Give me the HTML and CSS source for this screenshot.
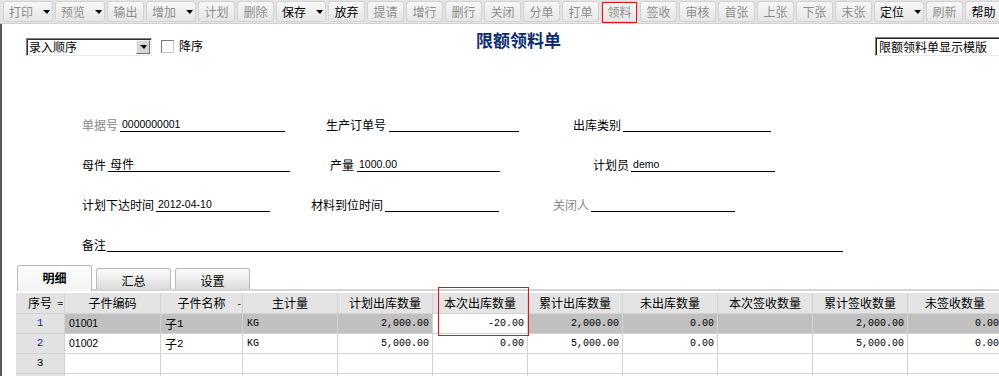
FILE: index.html
```html
<!DOCTYPE html>
<html lang="zh-CN">
<head>
  <meta charset="UTF-8">
  <title>限额领料单</title>
  <link rel="stylesheet" href="styles.css">
</head>
<body>
  <div class="toolbar">
    <span class="tb-btn drop first">打印<i class="arrow"></i></span>
    <span class="tb-btn drop">预览<i class="arrow"></i></span>
    <span class="tb-btn">输出</span>
    <span class="tb-btn drop">增加<i class="arrow"></i></span>
    <span class="tb-btn">计划</span>
    <span class="tb-btn">删除</span>
    <span class="tb-btn drop on">保存<i class="arrow"></i></span>
    <span class="tb-btn on">放弃</span>
    <span class="tb-btn">提请</span>
    <span class="tb-btn">增行</span>
    <span class="tb-btn">删行</span>
    <span class="tb-btn">关闭</span>
    <span class="tb-btn">分单</span>
    <span class="tb-btn">打单</span>
    <span class="tb-btn hot">领料</span>
    <span class="tb-btn">签收</span>
    <span class="tb-btn">审核</span>
    <span class="tb-btn">首张</span>
    <span class="tb-btn">上张</span>
    <span class="tb-btn">下张</span>
    <span class="tb-btn">末张</span>
    <span class="tb-btn drop on">定位<i class="arrow"></i></span>
    <span class="tb-btn">刷新</span>
    <span class="tb-btn on">帮助</span>
  </div>

  <div class="page">
    <div class="head">
      <div class="combo"><span class="combo-text">录入顺序</span><span class="combo-btn"><i class="arrow"></i></span></div>
      <div class="check"><span class="box"></span>降序</div>
      <h1 class="title">限额领料单</h1>
      <div class="tpl">限额领料单显示模版</div>
    </div>

    <div class="form">
      <div class="row">
        <div class="field f-no"><span class="lbl dim">单据号</span><span class="val num-val">0000000001</span></div>
        <div class="field f-order"><span class="lbl">生产订单号</span><span class="val"></span></div>
        <div class="field f-type"><span class="lbl">出库类别</span><span class="val"></span></div>
      </div>
      <div class="row">
        <div class="field f-parent"><span class="lbl">母件</span><span class="val">母件</span></div>
        <div class="field f-qty"><span class="lbl">产量</span><span class="val num-val">1000.00</span></div>
        <div class="field f-planner"><span class="lbl">计划员</span><span class="val num-val">demo</span></div>
      </div>
      <div class="row">
        <div class="field f-date"><span class="lbl">计划下达时间</span><span class="val num-val">2012-04-10</span></div>
        <div class="field f-arrive"><span class="lbl">材料到位时间</span><span class="val"></span></div>
        <div class="field f-closer"><span class="lbl dim">关闭人</span><span class="val"></span></div>
      </div>
      <div class="row">
        <div class="field f-memo"><span class="lbl">备注</span><span class="val"></span></div>
      </div>
    </div>

    <div class="tabs">
      <div class="tab active">明细</div>
      <div class="tab">汇总</div>
      <div class="tab">设置</div>
    </div>

    <div class="grid">
      <div class="grow head-row">
        <div class="c rh">序号<span class="grip">=</span></div>
        <div class="c">子件编码</div>
        <div class="c">子件名称<span class="grip">-</span></div>
        <div class="c">主计量</div>
        <div class="c">计划出库数量</div>
        <div class="c">本次出库数量</div>
        <div class="c">累计出库数量</div>
        <div class="c">未出库数量</div>
        <div class="c">本次签收数量</div>
        <div class="c">累计签收数量</div>
        <div class="c">未签收数量</div>
      </div>
      <div class="grow sel">
        <div class="c rh blue">1</div>
        <div class="c txt code">01001</div>
        <div class="c txt">子<span class="digit">1</span></div>
        <div class="c txt mono">KG</div>
        <div class="c num">2,000.00</div>
        <div class="c num edit">-20.00</div>
        <div class="c num">2,000.00</div>
        <div class="c num">0.00</div>
        <div class="c num"></div>
        <div class="c num">2,000.00</div>
        <div class="c num">0.00</div>
      </div>
      <div class="grow">
        <div class="c rh blue">2</div>
        <div class="c txt code">01002</div>
        <div class="c txt">子<span class="digit">2</span></div>
        <div class="c txt mono">KG</div>
        <div class="c num">5,000.00</div>
        <div class="c num">0.00</div>
        <div class="c num">5,000.00</div>
        <div class="c num">0.00</div>
        <div class="c num"></div>
        <div class="c num">5,000.00</div>
        <div class="c num">0.00</div>
      </div>
      <div class="grow">
        <div class="c rh">3</div>
        <div class="c"></div><div class="c"></div><div class="c"></div><div class="c"></div><div class="c"></div>
        <div class="c"></div><div class="c"></div><div class="c"></div><div class="c"></div><div class="c"></div>
      </div>
      <div class="grow">
        <div class="c rh"></div>
        <div class="c"></div><div class="c"></div><div class="c"></div><div class="c"></div><div class="c"></div>
        <div class="c"></div><div class="c"></div><div class="c"></div><div class="c"></div><div class="c"></div>
      </div>
    </div>

    <div class="callout"></div>
  </div>
</body>
</html>
```

FILE: styles.css
```css
body {
  margin: 0;
  width: 999px;
  height: 376px;
  overflow: hidden;
  background: #fff;
  color: #000;
  font-family: "Noto Sans CJK SC", sans-serif;
  font-size: 12px;
}

/* toolbar */
.toolbar {
  display: flex;
  gap: 2px;
  height: 22px;
  padding: 1px 0 0 3px;
  background: #e3e3e3;
  border-bottom: 1px solid #d2d2d2;
  overflow: hidden;
}
.tb-btn {
  flex: none;
  width: 37px;
  height: 21px;
  box-sizing: border-box;
  border: 1px solid #d3d3d3;
  border-radius: 3px;
  background: linear-gradient(#f7f7f7, #e6e6e6);
  color: #8e8e8e;
  line-height: 19px;
  text-align: center;
}
.tb-btn.drop {
  width: 50px;
  display: flex;
  align-items: center;
  justify-content: space-between;
  padding: 0 2px 0 5px;
}
.tb-btn.on {
  color: #000;
}
.tb-btn.hot {
  position: relative;
}
.tb-btn.hot::after {
  content: "";
  position: absolute;
  left: 0;
  top: 0;
  right: 0;
  bottom: -2px;
  border: 1px solid #e3131b;
}
.arrow {
  display: block;
  width: 0;
  height: 0;
  border-left: 4px solid transparent;
  border-right: 3px solid transparent;
  border-top: 4px solid #000;
}

/* page */
.page {
  position: relative;
  height: 352px;
  border-left: 2px solid #5a5a5a;
  overflow: hidden;
}
.head {
  display: flex;
  align-items: flex-start;
  height: 40px;
  padding-left: 24px;
}
.combo {
  display: flex;
  justify-content: space-between;
  width: 126px;
  height: 18px;
  margin-top: 14px;
  box-sizing: border-box;
  border: 1px solid;
  border-color: #808080 #e8e8e8 #e8e8e8 #808080;
  box-shadow: inset 1px 1px #303030;
  background: #fff;
}
.combo-text {
  padding-left: 2px;
  line-height: 16px;
}
.combo-btn {
  display: flex;
  align-items: center;
  justify-content: center;
  width: 14px;
  height: 14px;
  margin: 1px 1px 0 0;
  box-sizing: border-box;
  background: #d8d6d0;
  border: 1px solid;
  border-color: #f4f4f4 #707070 #707070 #f4f4f4;
}
.check {
  display: flex;
  align-items: center;
  gap: 5px;
  margin: 15px 0 0 9px;
  line-height: 14px;
}
.box {
  width: 13px;
  height: 13px;
  box-sizing: border-box;
  border: 1px solid;
  border-color: #7a7a7a #c8c8c8 #c8c8c8 #7a7a7a;
  background: #fff;
}
.title {
  margin: 5px 0 0 273px;
  color: #0c2c70;
  font-size: 17px;
  font-weight: bold;
  line-height: 22px;
}
.tpl {
  flex: none;
  width: 140px;
  height: 19px;
  margin: 13px 0 0 auto;
  box-sizing: border-box;
  border: 1px solid;
  border-color: #808080 #e8e8e8 #e8e8e8 #808080;
  box-shadow: inset 1px 1px #202020;
  padding-left: 3px;
  line-height: 17px;
  transform: translateX(16px);
}

/* header fields */
.form {
  margin-top: 28px;
  padding-left: 80px;
}
.row {
  display: flex;
  align-items: flex-end;
  height: 40px;
}
.field {
  display: flex;
  align-items: flex-end;
}
.lbl {
  line-height: 14px;
  white-space: nowrap;
}
.lbl.dim {
  color: #888;
}
.val {
  height: 14px;
  margin-left: 2px;
  padding-left: 2px;
  border-bottom: 1px solid #000;
  line-height: 14px;
  white-space: nowrap;
}
.num-val {
  font-family: "Liberation Sans", sans-serif;
  font-size: 10.5px;
}
.f-no .val { width: 163px; }
.f-order { margin-left: 41px; }
.f-order .val { width: 128px; margin-left: 3px; }
.f-type { margin-left: 54px; }
.f-type .val { width: 146px; }
.f-parent .val { width: 180px; }
.f-qty { margin-left: 40px; }
.f-qty .val { width: 141px; margin-left: 3px; }
.f-planner { margin-left: 93px; }
.f-planner .val { width: 142px; }
.f-date .val { width: 112px; }
.f-arrive { margin-left: 41px; }
.f-arrive .val { width: 112px; }
.f-closer { margin-left: 54px; }
.f-closer .val { width: 142px; }
.f-memo .val { width: 734px; margin-left: 1px; }

/* tabs */
.tabs {
  display: flex;
  align-items: flex-end;
  gap: 4px;
  height: 24px;
  margin: 13px 0 0 15px;
  border-bottom: 2px solid #d4d4d4;
}
.tab {
  width: 75px;
  height: 21px;
  box-sizing: border-box;
  border: 1px solid #b8b8b8;
  border-bottom: none;
  border-radius: 3px 3px 0 0;
  background: linear-gradient(#fcfcfc, #dcdcdc);
  text-align: center;
  line-height: 21px;
  padding-top: 1px;
}
.tab.active {
  height: 26px;
  margin-bottom: -2px;
  background: linear-gradient(#fdfdfd, #f3f3f3);
  font-weight: bold;
  line-height: 18px;
  padding-top: 3px;
}

/* detail grid */
.grid {
  margin: 2px 0 0 14px;
}
.grow {
  display: grid;
  grid-template-columns: 49px 96px 82px repeat(8, 95px);
  height: 20px;
}
.head-row {
  height: 21px;
  background: #e4e4e4;
}
.c {
  position: relative;
  box-sizing: border-box;
  border-right: 1px solid #d2d2d2;
  border-bottom: 1px solid #d2d2d2;
  line-height: 19px;
  white-space: nowrap;
  overflow: hidden;
}
.head-row .c {
  line-height: 20px;
  text-align: center;
}
.grip {
  position: absolute;
  right: 1px;
  top: 0;
  font-size: 10px;
}
.rh {
  background: #e2e2e2;
  text-align: center;
  font-family: "Liberation Mono", monospace;
  font-size: 11px;
}
.head-row .rh {
  font-family: "Noto Sans CJK SC", sans-serif;
  font-size: 12px;
}
.rh.blue {
  color: #1818c8;
}
.sel .c {
  background: #c0c0c0;
}
.sel .rh {
  background: #e2e2e2;
}
.sel .edit {
  background: #fff;
}
.txt {
  padding-left: 4px;
}
.code {
  font-family: "Liberation Sans", sans-serif;
  font-size: 10.5px;
}
.mono {
  font-family: "Liberation Mono", monospace;
  font-size: 10px;
}
.digit {
  font-family: "Liberation Mono", monospace;
  font-size: 11px;
  vertical-align: 2px;
}
.num {
  padding-right: 3px;
  text-align: right;
  font-family: "Liberation Mono", monospace;
  font-size: 10px;
}

.callout {
  position: absolute;
  left: 436px;
  top: 263px;
  width: 89px;
  height: 47px;
  border: 1px solid #e3131b;
}
```
